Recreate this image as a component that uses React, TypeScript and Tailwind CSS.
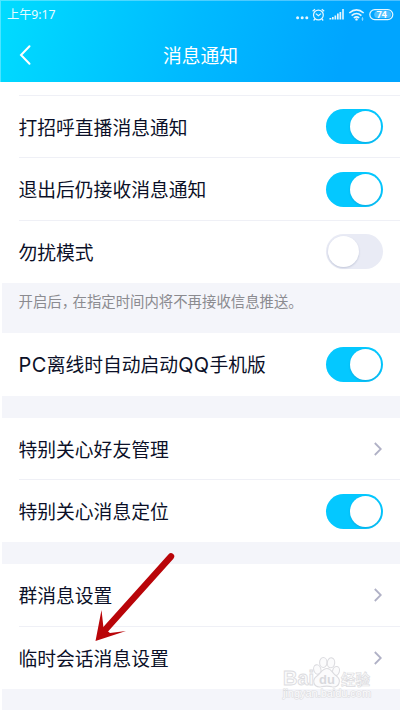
import React from 'react';

function Toggle({ on = false }: { on?: boolean }) {
  return (
    <div className={`flex h-[35px] w-[57px] shrink-0 items-center rounded-full p-[2px] ${on ? 'justify-end bg-[#04c8ff]' : 'justify-start bg-[#e9ebf5]'}`}>
      <div className="h-[31px] w-[31px] rounded-full bg-white shadow-[0_1px_2px_rgba(40,60,110,0.2)]" />
    </div>
  );
}

function Chevron() {
  return (
    <svg className="mr-px shrink-0" width="8" height="14" viewBox="0 0 8 14" fill="none" stroke="#b0b1c6" strokeWidth="1.8">
      <path d="M0.8 1L6.8 7L0.8 13" />
    </svg>
  );
}

function Latin({ children }: { children: React.ReactNode }) {
  return <span className="font-['Inter',sans-serif] text-[20px] tracking-[0.4px]">{children}</span>;
}

function Row({ label, children, className = '' }: { label: React.ReactNode; children: React.ReactNode; className?: string }) {
  return (
    <div className={`ml-[18px] flex shrink-0 items-center justify-between pr-[17px] ${className}`}>
      <span className="-ml-[0.5px] whitespace-nowrap text-[18.8px] leading-[26px] text-[#0b1028]">{label}</span>
      {children}
    </div>
  );
}

function Divider() {
  return <div className="ml-[18px] h-px shrink-0 bg-[#eff0f6]" />;
}

function StatusIcons() {
  return (
    <svg className="-translate-y-px" width="102" height="16" viewBox="0 0 102 16" fill="none" stroke="#e4f6ff" strokeWidth="1.2">
      <g fill="#e4f6ff" stroke="none">
        <circle cx="1.6" cy="11.8" r="1.5" />
        <circle cx="6.2" cy="11.8" r="1.5" />
        <circle cx="10.8" cy="11.8" r="1.5" />
        <path d="M33.5 12h1.8v1.5h-1.8zM36 11h1.7v2.5H36zM38.5 9.5h1.7v4h-1.7zM41 7.6h1.7v5.9H41zM43.5 6h1.7v7.5h-1.7zM46.2 3h1.6v10.5h-1.6z" />
      </g>
      <circle cx="22.4" cy="9" r="4.9" />
      <path d="M19.8 7.6L22.4 9.8L25 7.6M16.6 5.3L19 3.2M28.2 5.3L25.8 3.2M18.9 13L17.6 14.5M25.9 13L27.2 14.5" />
      <path d="M53.3 7Q60.5 0.8 67.7 7M55.6 9.6Q60.5 5.4 65.4 9.6M57.8 12Q60.5 9.8 63.2 12" strokeWidth="1.6" />
      <circle cx="60.5" cy="13.4" r="1.2" fill="#e4f6ff" stroke="none" />
      <path d="M66.5 11v4M65.3 13h2.4" strokeWidth=".8" opacity=".6" />
      <rect x="73.8" y="3.6" width="23" height="10" rx="5" />
      <rect x="78.2" y="5.1" width="17" height="7" rx="3.5" fill="#e4f6ff" stroke="none" opacity=".35" />
      <text x="85.6" y="12.2" textAnchor="middle" fill="#fff" stroke="none" fontSize="9.5" fontWeight="700" letterSpacing="-0.4" fontFamily="Roboto, sans-serif">74</text>
    </svg>
  );
}

function Watermark() {
  return (
    <svg className="absolute left-[278px] top-[652px]" width="104" height="52" viewBox="0 0 104 52" fill="#fbfbfc" stroke="#dcdce0" strokeWidth="1.1" fontFamily="'Liberation Sans', 'Noto Sans CJK SC', sans-serif">
      <text x="5" y="33" fontSize="20" fontWeight="700" textLength="31" lengthAdjust="spacingAndGlyphs" strokeWidth=".9">Bai</text>
      <g>
        <ellipse cx="39.3" cy="17.5" rx="3.6" ry="4.8" transform="rotate(-15 39.3 17.5)" />
        <ellipse cx="45.3" cy="10.5" rx="3.7" ry="5" />
        <ellipse cx="53" cy="10.8" rx="3.7" ry="5" transform="rotate(8 53 10.8)" />
        <ellipse cx="58" cy="19" rx="3.4" ry="4.6" transform="rotate(15 58 19)" />
        <path d="M49 16.5C44 16.5 43 21.5 39 24C33 28.5 36 36 43 34.8C47 34 51 34 54 34.8C61 36 64 28.5 58.5 24C54 21.5 54 16.5 49 16.5Z" />
      </g>
      <text x="41" y="32" fontSize="13" fontWeight="700" fill="#d8d9dd" stroke="none">du</text>
      <text x="63" y="33" fontSize="15" fontWeight="700" textLength="29" lengthAdjust="spacingAndGlyphs" strokeWidth=".7">经验</text>
      <text x="5" y="45" fontSize="11" textLength="88" lengthAdjust="spacingAndGlyphs" paintOrder="stroke" strokeWidth="1.2">jingyan.baidu.com</text>
    </svg>
  );
}

export default function App() {
  return (
    <div className="relative flex h-[711px] w-[400px] flex-col overflow-hidden bg-white font-['Noto_Sans_CJK_SC',sans-serif]">
      <header className="h-[82px] shrink-0 border-l border-t border-white/30 bg-[linear-gradient(105deg,#00dcff_0%,#00baff_48%,#00a5ff_85%)] bg-origin-border text-white">
        <div className="flex h-[27px] items-center justify-between pl-[6px] pr-[2px]">
          <span className="whitespace-nowrap font-['Noto_Sans','Noto_Sans_CJK_SC',sans-serif] text-[12.2px] leading-[18px] text-[#e8fbff]">上午9:17</span>
          <StatusIcons />
        </div>
        <div className="grid h-[54px] grid-cols-[60px_1fr_60px] items-center">
          <svg className="ml-[18px]" width="14" height="22" viewBox="0 0 14 22" fill="none" stroke="white" strokeWidth="2" strokeLinecap="round">
            <path d="M10.5 2.2L2 11L10.5 19.8" />
          </svg>
          <h1 className="text-center text-[18.8px] font-normal leading-[26px]">消息通知</h1>
        </div>
      </header>

      <main className="flex flex-1 flex-col pl-px">
        <div className="h-[13px] shrink-0" />
        <Divider />
        <Row label="打招呼直播消息通知" className="h-[61px]"><Toggle on /></Row>
        <Divider />
        <Row label="退出后仍接收消息通知" className="h-[62px]"><Toggle on /></Row>
        <Divider />
        <Row label="勿扰模式" className="h-[62px] pb-px"><Toggle /></Row>
        <p className="ml-px h-[50px] shrink-0 bg-[#f4f5fa] pl-[16.5px] pt-[8px] text-[14.4px] leading-[20px] text-[#8b8b90]">
          开启后<span className="tracking-[-3.6px]">，</span>在指定时间内将不再接收信息推送。
        </p>
        <Row label={<><Latin>PC</Latin>离线时自动启动<Latin>QQ</Latin>手机版</>} className="h-[63px]"><Toggle on /></Row>
        <div className="ml-px h-[22px] shrink-0 bg-[#f4f5fa]" />
        <Row label="特别关心好友管理" className="h-[61px]"><Chevron /></Row>
        <Divider />
        <Row label="特别关心消息定位" className="h-[62px]"><Toggle on /></Row>
        <div className="ml-px h-[22px] shrink-0 bg-[#f4f5fa]" />
        <Row label="群消息设置" className="h-[62px]"><Chevron /></Row>
        <Divider />
        <Row label="临时会话消息设置" className="h-[62px]"><Chevron /></Row>
        <div className="ml-px h-[21px] shrink-0 bg-[#f4f5fa]" />
      </main>

      <svg className="absolute left-[90px] top-[548px]" width="90" height="98" viewBox="0 0 90 98" fill="#b90509">
        <path d="M81 8.5L15 82" stroke="#b90509" strokeWidth="6.4" strokeLinecap="round" />
        <path d="M5.5 93L11.5 62L13.5 80L20 85L36 83Z" />
      </svg>
      <Watermark />
    </div>
  );
}
